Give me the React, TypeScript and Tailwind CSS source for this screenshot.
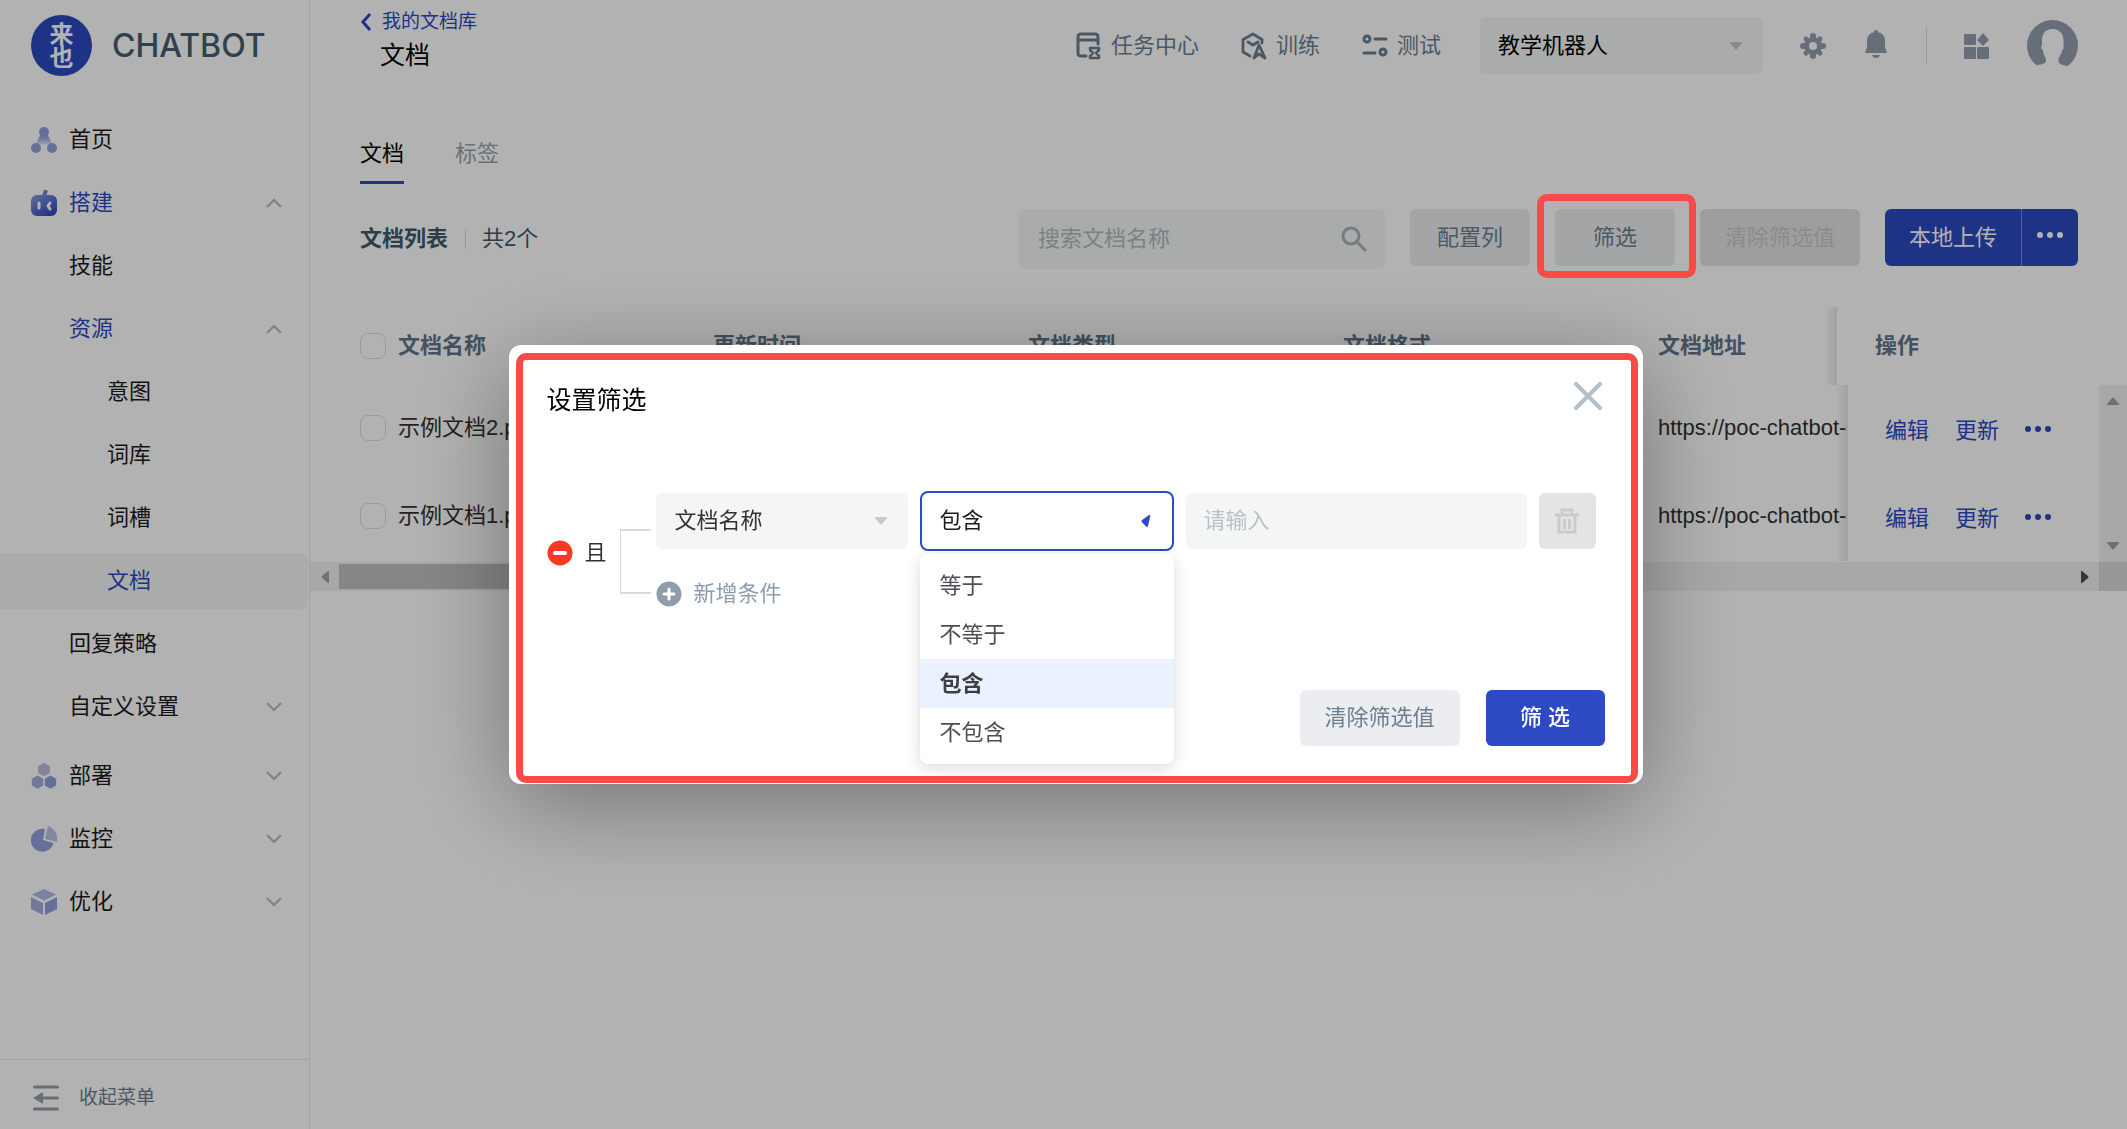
import { useState } from 'react';
import clsx from 'clsx';

const menu = [
  { name: '首页', level: 1, icon: 'home' },
  { name: '搭建', level: 1, icon: 'build', arrow: 'up', active: true },
  { name: '技能', level: 2 },
  { name: '资源', level: 2, arrow: 'up', active: true },
  { name: '意图', level: 3 },
  { name: '词库', level: 3 },
  { name: '词槽', level: 3 },
  { name: '文档', level: 3, active: true, current: true },
  { name: '回复策略', level: 2 },
  { name: '自定义设置', level: 2, arrow: 'down', last: true },
  { name: '部署', level: 1, icon: 'deploy', arrow: 'down' },
  { name: '监控', level: 1, icon: 'monitor', arrow: 'down' },
  { name: '优化', level: 1, icon: 'optimize', arrow: 'down' },
];

const docs = [
  { id: 2, name: '示例文档2.pdf', time: '2022-03-01', type: '文件', format: 'pdf', url: 'https://poc-chatbot-' },
  { id: 1, name: '示例文档1.pdf', time: '2022-03-01', type: '文件', format: 'pdf', url: 'https://poc-chatbot-' },
];

const operators = ['等于', '不等于', '包含', '不包含'];

function MenuIcon({ name }: { name?: string }) {
  if (name === 'home') {
    return (
      <svg viewBox="0 0 26 26" className="size-[26px]" aria-hidden="true">
        <defs>
          <linearGradient id="home-g" x1="0" y1="0" x2="0" y2="1">
            <stop offset="0.3" stopColor="#98a6e0" />
            <stop offset="1" stopColor="#98a6e0" stopOpacity="0.1" />
          </linearGradient>
        </defs>
        <path d="M9 8h8l5 11-9-2-9 2z" fill="url(#home-g)" />
        <circle cx="13" cy="5" r="5" fill="#93a0dc" />
        <circle cx="5" cy="21" r="5" fill="#93a0dc" />
        <circle cx="21" cy="21" r="5" fill="#93a0dc" />
      </svg>
    );
  }
  if (name === 'build') {
    return (
      <svg viewBox="0 0 26 26" className="size-[26px]" aria-hidden="true">
        <defs>
          <linearGradient id="build-g" x1="0.1" y1="0" x2="0.8" y2="1">
            <stop offset="0" stopColor="#8a98d8" />
            <stop offset="1" stopColor="#2b48be" />
          </linearGradient>
        </defs>
        <path d="M13 6l2-6" stroke="#7685cf" strokeWidth="4" />
        <rect y="5" width="26" height="21" rx="6" fill="url(#build-g)" />
        <path d="M8 13v5M19 13l-2 3 2 3" fill="none" stroke="#fff" strokeWidth="3" strokeLinecap="round" strokeLinejoin="round" />
      </svg>
    );
  }
  if (name === 'deploy') {
    return (
      <svg viewBox="0 0 26 26" className="size-[26px]" aria-hidden="true">
        <path d="M13 0l6 3.300v6.600l-6 3.300-6-3.300V3.300z" fill="#b9c1e0" />
        <path d="M6.500 12.500l5.700 3.300v6.600l-5.700 3.300-5.700-3.300v-6.600z" fill="#a2addd" />
        <path d="M19.500 12.500l5.700 3.300v6.600l-5.700 3.300-5.700-3.300v-6.600z" fill="#93a0dc" />
      </svg>
    );
  }
  if (name === 'monitor') {
    return (
      <svg viewBox="0 0 26 26" className="size-[26px]" aria-hidden="true">
        <path d="M14 3A11.500 11.500 0 1 0 22.500 17L12 14z" fill="#93a0dc" />
        <path d="M17 0A14 14 0 0 1 26 16L14 13z" fill="#b9c1e6" />
      </svg>
    );
  }
  return (
    <svg viewBox="0 0 26 26" className="size-[26px]" aria-hidden="true">
      <path d="M13 0l12 5.500-12 6-12-6z" fill="#b0bae3" />
      <path d="M0 8l12 6v12L0 20z" fill="#a2addd" />
      <path d="M26 8l-12 6v12l12-6z" fill="#93a0dc" />
    </svg>
  );
}

function Caret({ className }: { className?: string }) {
  return (
    <svg viewBox="0 0 14 8" className={clsx('pointer-events-none h-2 w-[14px]', className)} aria-hidden="true">
      <path d="M2 0h10q2 0 1 1L8 7q-1 1-2 0L1 1Q0 0 2 0z" fill="currentColor" />
    </svg>
  );
}

function Dots() {
  return (
    <svg viewBox="0 0 26 6" className="h-[6px] w-[26px]" aria-hidden="true">
      <g fill="currentColor">
        <circle cx="3" cy="3" r="3" />
        <circle cx="13" cy="3" r="3" />
        <circle cx="23" cy="3" r="3" />
      </g>
    </svg>
  );
}

function Sidebar() {
  return (
    <aside className="flex w-[310px] shrink-0 flex-col border-r border-[#e9e9e9]">
      <div className="flex h-[91px] items-center gap-5 pl-[31px]">
        <div className="flex size-[61px] flex-col items-center justify-center rounded-full bg-[#2d4ac0] text-[24px] font-bold leading-[23px] text-white">
          <span>来</span>
          <span>也</span>
        </div>
        <span className="font-['Inter',sans-serif] text-[32px] font-medium text-[#435d6e]">CHATBOT</span>
      </div>

      <nav className="mt-[21px] flex-1">
        <ul className="flex flex-col gap-[7px]">
          {menu.map((item) => (
            <li key={item.name + item.level} className={clsx(item.last && 'mb-[6px]')}>
              <a
                href="#"
                className={clsx(
                  'mr-px flex h-14 items-center rounded-r-lg pr-[26px]',
                  item.level === 1 && 'gap-3 pl-[31px]',
                  item.level === 2 && 'pl-[69px]',
                  item.level === 3 && 'pl-[107px]',
                  item.active ? 'text-[#2d4ac0]' : 'text-[#1c1c1c]',
                  item.current && 'bg-[#f4f6f6]'
                )}
              >
                {item.icon && <MenuIcon name={item.icon} />}
                <span className="flex-1">{item.name}</span>
                {item.arrow && (
                  <svg viewBox="0 0 16 10" className="h-[10px] w-4" aria-hidden="true">
                    <path
                      d={item.arrow === 'up' ? 'M1 9l7-7 7 7' : 'M1 1l7 7 7-7'}
                      fill="none"
                      stroke="#b3bac1"
                      strokeWidth="2"
                    />
                  </svg>
                )}
              </a>
            </li>
          ))}
        </ul>
      </nav>

      <button className="flex h-[70px] items-center gap-5 border-t border-[#e9e9e9] pl-[33px] pt-[6px] text-[19px] text-[#6a7f8f]">
        <svg viewBox="0 0 26 26" className="size-[26px]" aria-hidden="true">
          <path d="M1.500 2h23M9 13h15.500M1.500 24h23" stroke="#93a0ae" strokeWidth="3" strokeLinecap="round" />
          <path d="M0 13l10-6v12z" fill="#93a0ae" />
        </svg>
        收起菜单
      </button>
    </aside>
  );
}

function Header() {
  return (
    <header className="flex h-[91px] justify-between pl-[50px] pr-[49px]">
      <div className="pt-2">
        <a href="#" className="flex items-center gap-[10px] text-[19px] leading-7 text-[#2d4ac0]">
          <svg viewBox="0 0 12 18" className="h-[18px] w-3" aria-hidden="true">
            <path d="M10 1L3 9l7 8" fill="none" stroke="currentColor" strokeWidth="3" />
          </svg>
          我的文档库
        </a>
        <h1 className="pl-5 pt-px text-[25px] leading-9 text-black">文档</h1>
      </div>

      <div className="flex items-center gap-[37px]">
        <nav className="mr-[2px] flex gap-[42px] text-[#6a7f8f]">
          <a href="#" className="flex items-center gap-[9px]">
            <svg viewBox="0 0 26 28" className="h-7 w-[26px]" fill="none" stroke="currentColor" strokeWidth="3" strokeLinecap="round" strokeLinejoin="round" aria-hidden="true">
              <path d="M10 24H5q-3 0-3-3V5q0-3 3-3h14q3 0 3 3v7M2 8h20" />
              <path d="M14 16h9v2l-3 3 3 3v2h-9v-2l3-3-3-3z" strokeWidth="2.500" />
            </svg>
            任务中心
          </a>
          <a href="#" className="flex items-center gap-[9px]">
            <svg viewBox="0 0 26 28" className="h-7 w-[26px]" fill="none" stroke="currentColor" strokeWidth="2.800" strokeLinecap="round" strokeLinejoin="round" aria-hidden="true">
              <path d="M9 24l-7-4V7.500L12 2l9 5.500V11M7 10l5 3 5-3" />
              <path d="M13 26l5-13 6 13-6-4z" />
            </svg>
            训练
          </a>
          <a href="#" className="flex items-center gap-[9px]">
            <svg viewBox="0 0 26 26" className="size-[26px]" fill="none" stroke="currentColor" strokeWidth="3" strokeLinecap="round" aria-hidden="true">
              <circle cx="5" cy="6" r="3" />
              <circle cx="21" cy="19" r="3" />
              <path d="M13 6h11M2 20h11" />
            </svg>
            测试
          </a>
        </nav>

        <div className="relative flex items-center">
          <select aria-label="机器人" className="h-[57px] w-[283px] appearance-none rounded-md bg-[#f4f6f6] px-[18px] text-black">
            <option>教学机器人</option>
          </select>
          <Caret className="absolute right-5 text-[#c8c8c8]" />
        </div>

        <button aria-label="设置" className="text-[#93a0ae]">
          <svg viewBox="0 0 26 26" className="size-[26px]" aria-hidden="true">
            <g stroke="currentColor" strokeWidth="6" strokeLinecap="round">
              <path d="M13 3v20M3 13h20" />
              <path d="M6 6l14 14M20 6L6 20" strokeWidth="5" />
            </g>
            <circle cx="13" cy="13" r="9" fill="currentColor" />
            <circle cx="13" cy="13" r="4" fill="#fff" />
          </svg>
        </button>
        <button aria-label="通知" className="pb-1 text-[#93a0ae]">
          <svg viewBox="0 0 26 28" className="h-7 w-[26px]" fill="currentColor" aria-hidden="true">
            <circle cx="13" cy="2" r="2" />
            <path d="M13 2c6 0 9 4 9 9v6l2 6H2l2-6v-6c0-5 3-9 9-9zM9 25h8q-1 3-4 3t-4-3z" />
          </svg>
        </button>
        <span className="h-[37px] w-px bg-[#d9dcdf]" />
        <button aria-label="应用" className="text-[#93a0ae]">
          <svg viewBox="0 0 26 26" className="size-[26px]" fill="currentColor" aria-hidden="true">
            <rect x="0" y="1" width="12" height="11" rx="1" />
            <rect x="0" y="14" width="12" height="12" rx="1" />
            <rect x="13" y="14" width="12" height="12" rx="1" />
            <path d="M19 0l6 7-6 6-6-6z" />
          </svg>
        </button>
        <button aria-label="账号">
          <svg viewBox="0 0 51 51" className="size-[51px]" aria-hidden="true">
            <circle cx="25.500" cy="25.500" r="25.500" fill="#93a0ae" />
            <path
              d="M25.500 9c8 0 11 6 11 12v4q1 3-1 5c-1 4-3 6-4 9v3q0 2 8 4l-2 5H14l-4-6q9-1 9-4v-2c-1-3-3-5-3-9q-3-2-1-5v-4c0-7 3-12 10.500-12z"
              fill="#fff"
            />
            <path d="M8 46h35v5H8z" fill="#fff" />
          </svg>
        </button>
      </div>
    </header>
  );
}

function Toolbar() {
  return (
    <div className="mt-[25px] flex items-start justify-between pl-[50px] pr-[49px]">
      <div className="flex h-[60px] items-center text-[#3f596b]">
        <h2 className="font-bold">文档列表</h2>
        <span className="ml-[17px] mr-4 h-5 w-px bg-[#d3d7da]" />
        <span>共2个</span>
      </div>

      <div className="flex items-start gap-[25px]">
        <div className="relative flex items-center">
          <input
            aria-label="搜索文档名称"
            placeholder="搜索文档名称"
            className="h-[60px] w-[367px] rounded-md bg-[#f4f6f6] pl-5 pr-14 placeholder:text-[#b1b8c0]"
          />
          <svg viewBox="0 0 26 26" className="absolute right-[18px] size-[26px]" fill="none" stroke="#a9b1b9" strokeWidth="3" strokeLinecap="round" aria-hidden="true">
            <circle cx="10" cy="10" r="8" />
            <path d="M16 16l8 8" />
          </svg>
        </div>
        <button className="h-[57px] w-[120px] rounded-md bg-[#ebedf0] text-[#6a7f8f]">配置列</button>
        <div className="relative">
          <button className="h-[57px] w-[120px] rounded-md bg-[#ebedf0] text-[#6a7f8f]">筛选</button>
          <div className="pointer-events-none absolute -bottom-3 -left-[18px] -right-[21px] -top-[15px] z-20 rounded-[10px] border-[7px] border-[#f84b47]" />
        </div>
        <button disabled className="h-[57px] w-[160px] rounded-md bg-[#e3e3e3] text-[#c8c8c8]">清除筛选值</button>
        <div className="flex h-[57px] overflow-hidden rounded-md bg-[#2d4ac0] text-white">
          <button className="w-[137px] border-r border-[#6d88e6]">本地上传</button>
          <button aria-label="更多上传方式" className="flex w-14 items-center justify-center pb-[6px]">
            <Dots />
          </button>
        </div>
      </div>
    </div>
  );
}

function Columns({ action }: { action: string }) {
  return (
    <colgroup>
      <col className="w-[88px]" />
      <col className="w-[315px]" />
      <col className="w-[315px]" />
      <col className="w-[315px]" />
      <col className="w-[315px]" />
      <col />
      <col className={action} />
    </colgroup>
  );
}

const fixedShadow =
  'relative bg-white before:absolute before:inset-y-0 before:-left-3 before:w-3 before:bg-gradient-to-l before:from-black/10 before:to-transparent';

function DocumentTable() {
  const checkbox = 'block size-[26px] appearance-none rounded-lg border border-[#dcdfe2]';

  return (
    <div className="mt-[38px]">
      <table className="w-full table-fixed text-left">
        <Columns action="w-[290px]" />
        <thead className="text-[#61758a]">
          <tr className="h-[78px]">
            <th className="pl-[50px]">
              <input type="checkbox" aria-label="全选" className={checkbox} />
            </th>
            <th>文档名称</th>
            <th>更新时间</th>
            <th>文档类型</th>
            <th>文档格式</th>
            <th>文档地址</th>
            <th className={clsx(fixedShadow, 'pl-[38px]')}>操作</th>
          </tr>
        </thead>
      </table>

      <div className="flex">
        <div className="h-[177px] min-w-0 flex-1 overflow-hidden">
          <table className="w-full table-fixed text-left text-[#303133]">
            <Columns action="w-[251px]" />
            <tbody>
              {docs.map((doc) => (
                <tr key={doc.id} className="h-[88px]">
                  <td className="pb-[3px] pl-[50px]">
                    <input type="checkbox" aria-label={doc.name} className={checkbox} />
                  </td>
                  <td className="pb-[3px]">{doc.name}</td>
                  <td className="pb-[3px]">{doc.time}</td>
                  <td className="pb-[3px]">{doc.type}</td>
                  <td className="pb-[3px]">{doc.format}</td>
                  <td className="overflow-hidden whitespace-nowrap pb-[3px]">{doc.url}</td>
                  <td className={clsx(fixedShadow, 'pl-[37px] pt-[3px] text-[#2d4ac0]')}>
                    <div className="flex items-start gap-[26px]">
                      <button>编辑</button>
                      <button>更新</button>
                      <button aria-label="更多操作" className="flex h-7 items-center">
                        <Dots />
                      </button>
                    </div>
                  </td>
                </tr>
              ))}
            </tbody>
          </table>
        </div>
        <div className="flex w-7 flex-col items-center justify-between bg-[#f1f1f1] py-3 text-[#a3a3a3]">
          <Caret className="rotate-180" />
          <Caret />
        </div>
      </div>

      <div className="flex h-[29px] bg-[#f1f1f1]">
        <div className="flex w-[29px] items-center justify-center text-[#a3a3a3]">
          <Caret className="rotate-90" />
        </div>
        <div className="flex flex-1 items-center">
          <div className="h-[25px] w-3/5 bg-[#c1c1c1]" />
        </div>
        <div className="flex w-[29px] items-center justify-center text-[#505050]">
          <Caret className="-rotate-90" />
        </div>
        <div className="w-7 bg-[#dadada]" />
      </div>
    </div>
  );
}

function FilterDialog() {
  const [operator, setOperator] = useState('包含');

  return (
    <div
      role="dialog"
      aria-labelledby="filter-title"
      className="relative w-[1134px] rounded-xl bg-white px-[38px] pb-[38px] pt-[37px] shadow-[0_20px_96px_rgba(0,0,0,0.36)]"
    >
      <div className="flex items-start justify-between">
        <h2 id="filter-title" className="text-[25px] leading-[37px] text-black">设置筛选</h2>
        <button aria-label="关闭" className="mr-[3px]">
          <svg viewBox="0 0 28 28" className="size-7" aria-hidden="true">
            <path d="M2 2l24 24M26 2L2 26" stroke="#b3bec9" strokeWidth="4" strokeLinecap="round" />
          </svg>
        </button>
      </div>

      <div className="mt-[72px] flex items-center pr-[9px]">
        <button aria-label="删除条件组">
          <svg viewBox="0 0 26 26" className="size-[26px]" aria-hidden="true">
            <circle cx="13" cy="13" r="12.500" fill="#f73b22" />
            <path d="M8 13h10" stroke="#fff" strokeWidth="4" strokeLinecap="round" />
          </svg>
        </button>
        <span className="ml-3 text-[#303133]">且</span>
        <div className="ml-[13px] mr-[5px] mt-4 h-[65px] w-[31px] border-y-2 border-l border-[#d6dbe2]" />

        <div className="min-w-0 flex-1">
          <div className="flex items-center gap-3">
            <div className="relative flex items-center">
              <select aria-label="字段" className="h-14 w-[252px] appearance-none rounded-md bg-[#f4f6f6] px-[19px] text-[#303133]">
                <option>文档名称</option>
              </select>
              <Caret className="absolute right-5 text-[#c8c8c8]" />
            </div>

            <div className="relative flex items-center">
              <select
                aria-label="条件"
                value={operator}
                onChange={(e) => setOperator(e.target.value)}
                className="h-[60px] w-[254px] appearance-none rounded-lg border-2 border-[#2d4ac4] bg-white px-[18px] text-[#1c1c1c]"
              >
                {operators.map((o) => (
                  <option key={o}>{o}</option>
                ))}
              </select>
              <svg viewBox="0 0 10 14" className="pointer-events-none absolute right-[23px] h-[14px] w-[10px]" aria-hidden="true">
                <path d="M1 6L8 1q1.500-.5 1.300 1L7 12q-.7 2-1.800.5L.7 8Q0 7 1 6z" fill="#2d4ac4" />
              </svg>

              <ul
                role="listbox"
                className="absolute inset-x-0 top-[63px] rounded-lg bg-white py-[7px] text-[#4b4f54] shadow-[0_4px_16px_rgba(0,0,0,0.15)]"
              >
                {operators.map((o) => (
                  <li
                    key={o}
                    role="option"
                    aria-selected={o === operator}
                    onClick={() => setOperator(o)}
                    className={clsx('flex h-[49px] items-center px-5', o === operator && 'bg-[#ebf1fe] font-bold text-[#3b3f44]')}
                  >
                    {o}
                  </li>
                ))}
              </ul>
            </div>

            <input
              aria-label="值"
              placeholder="请输入"
              className="h-14 min-w-0 flex-1 rounded-md bg-[#f4f6f6] px-[18px] placeholder:text-[#b8c0c8]"
            />
            <button disabled aria-label="删除条件" className="flex h-14 w-[57px] items-center justify-center rounded-md bg-[#e4e4e4] text-[#cbcbcb]">
              <svg viewBox="0 0 26 26" className="size-[26px]" fill="none" stroke="currentColor" strokeWidth="3" aria-hidden="true">
                <path d="M1 7h24M8 7V2h10v5M5 7v17h16V7M10.500 11v10M15.500 11v10" />
              </svg>
            </button>
          </div>

          <button className="mt-[21px] flex h-[43px] items-center gap-3 text-[#8f9cab]">
            <svg viewBox="0 0 26 26" className="size-[26px]" aria-hidden="true">
              <circle cx="13" cy="13" r="12.500" fill="#8f9cab" />
              <path d="M8 13h10M13 8v10" stroke="#fff" strokeWidth="3" strokeLinecap="round" />
            </svg>
            新增条件
          </button>
        </div>
      </div>

      <div className="mt-[75px] flex justify-end gap-[26px]">
        <button className="h-14 w-[160px] rounded-md bg-[#ecedf0] text-[#6b7f90]">清除筛选值</button>
        <button className="h-14 w-[119px] rounded-md bg-[#2d4ac4] font-medium text-white">筛 选</button>
      </div>

      <div className="pointer-events-none absolute bottom-px left-[7px] right-[5px] top-2 rounded-[10px] border-[7px] border-[#f84b47]" />
    </div>
  );
}

export default function App() {
  return (
    <div className="flex min-h-screen bg-white font-['Liberation_Sans','Noto_Sans_CJK_SC',sans-serif] text-[22px] leading-8">
      <Sidebar />
      <main className="min-w-0 flex-1">
        <Header />
        <div role="tablist" className="mt-[47px] flex gap-[51px] pl-[50px]">
          <button role="tab" aria-selected="true" className="border-b-[3px] border-[#2d4ac0] pb-[11px] text-black">文档</button>
          <button role="tab" aria-selected="false" className="border-b-[3px] border-transparent pb-[11px] text-[#95a3ad]">标签</button>
        </div>
        <Toolbar />
        <DocumentTable />
      </main>

      {/* Filter dialog and its mask */}
      <div className="fixed inset-0 z-10 flex items-center justify-center bg-black/30 pl-6">
        <FilterDialog />
      </div>
    </div>
  );
}
